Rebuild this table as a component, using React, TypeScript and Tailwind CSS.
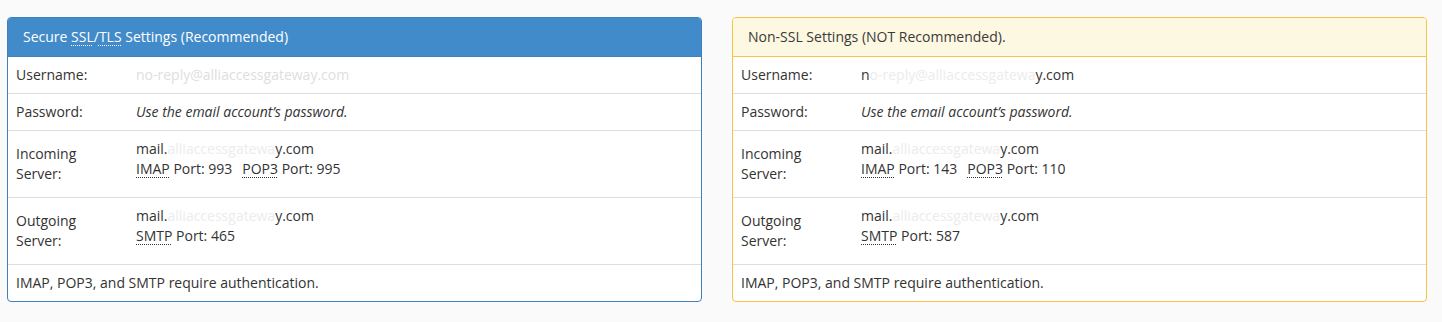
import React from "react";

type Panel = {
  title: React.ReactNode;
  tone: "primary" | "warning";
  user: React.ReactNode;
  imap: string;
  pop3: string;
  smtp: string;
};

const Abbr = ({ children }: { children: React.ReactNode }) => (
  <span className="underline decoration-dotted decoration-1 underline-offset-[3px]">
    {children}
  </span>
);

const Faded = ({ children }: { children: React.ReactNode }) => (
  <span className="text-[#ececec]">{children}</span>
);

const Host = () => (
  <>
    mail.<Faded>alliaccessgatewa</Faded>y.com
  </>
);

const panels: Panel[] = [
  {
    tone: "primary",
    title: (
      <span>
        Secure <Abbr>SSL</Abbr>/<Abbr>TLS</Abbr> Settings (Recommended)
      </span>
    ),
    user: <span className="text-[#dedede]">no-reply@alliaccessgateway.com</span>,
    imap: "993",
    pop3: "995",
    smtp: "465",
  },
  {
    tone: "warning",
    title: <span>Non-SSL Settings (NOT Recommended).</span>,
    user: (
      <>
        n<Faded>o-reply@alliaccessgatewa</Faded>y.com
      </>
    ),
    imap: "143",
    pop3: "110",
    smtp: "587",
  },
];

function SettingsPanel({ panel }: { panel: Panel }) {
  const primary = panel.tone === "primary";
  return (
    <div
      className={
        primary
          ? "flex-1 rounded-[4px] border border-[#3f80bd] bg-white overflow-hidden"
          : "flex-1 rounded-[4px] border border-[#f6c342] bg-white overflow-hidden"
      }
    >
      <div
        className={
          primary
            ? "h-[39px] flex items-center px-[15px] bg-[#428bca] text-white border-b border-[#3f80bd]"
            : "h-[39px] flex items-center px-[15px] bg-[#fdf8e1] text-[#3a3a3a] border-b border-[#f6c342]"
        }
      >
        {panel.title}
      </div>
      <div className="flex h-[37px] items-center border-b border-[#dddddd]">
        <div className="w-[128px] pl-2">Username:</div>
        <div>{panel.user}</div>
      </div>
      <div className="flex h-[37px] items-center border-b border-[#dddddd]">
        <div className="w-[128px] pl-2">Password:</div>
        <div className="italic">Use the email account’s password.</div>
      </div>
      <div className="flex h-[67px] border-b border-[#dddddd]">
        <div className="w-[128px] pl-2 self-center">
          Incoming
          <br />
          Server:
        </div>
        <div className="pt-2">
          <div>
            <Host />
          </div>
          <div>
            <Abbr>IMAP</Abbr> Port: {panel.imap}
            <span className="ml-[10px]">
              <Abbr>POP3</Abbr> Port: {panel.pop3}
            </span>
          </div>
        </div>
      </div>
      <div className="flex h-[67px] border-b border-[#dddddd]">
        <div className="w-[128px] pl-2 self-center">
          Outgoing
          <br />
          Server:
        </div>
        <div className="pt-2">
          <div>
            <Host />
          </div>
          <div>
            <Abbr>SMTP</Abbr> Port: {panel.smtp}
          </div>
        </div>
      </div>
      <div className="flex h-[36px] items-center pl-2">
        IMAP, POP3, and SMTP require authentication.
      </div>
    </div>
  );
}

export default function App() {
  return (
    <div
      className="min-h-screen bg-[#fafafa] pl-[7px] pr-[15px] pt-[17px] text-[14px] leading-5 text-[#333333]"
      style={{ fontFamily: '"Open Sans", "Liberation Sans", sans-serif' }}
    >
      <div className="flex gap-[30px]">
        {panels.map((p, i) => (
          <SettingsPanel key={i} panel={p} />
        ))}
      </div>
    </div>
  );
}
